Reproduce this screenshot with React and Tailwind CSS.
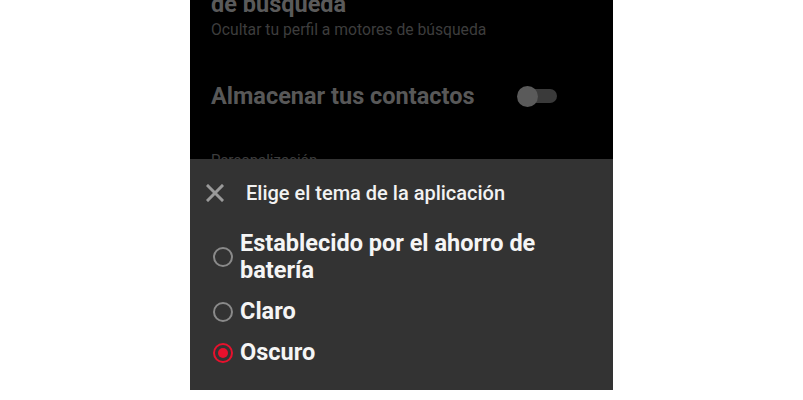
import React, { useState } from 'react';

const options = [
  { id: 'battery', label: 'Establecido por el ahorro de batería' },
  { id: 'light', label: 'Claro' },
  { id: 'dark', label: 'Oscuro' },
];

const Radio = ({ checked }) =>
  checked ? (
    <span className="flex h-[20px] w-[20px] shrink-0 items-center justify-center rounded-full border-2 border-[#e8112d]">
      <span className="h-[10px] w-[10px] rounded-full bg-[#e8112d]" />
    </span>
  ) : (
    <span className="h-[20px] w-[20px] shrink-0 rounded-full border-2 border-[#8a8a8a]" />
  );

const App = () => {
  const [theme, setTheme] = useState('dark');

  return (
    <div className="flex h-[400px] w-full justify-center bg-white font-['Roboto',sans-serif]">
      <div className="flex h-[390px] w-[423px] flex-col overflow-hidden bg-black">
        {/* settings behind the sheet */}
        <div className="h-[159px] overflow-hidden px-[21px]">
          <div className="-mt-[10px] text-[23.5px] font-bold leading-[28px] text-[#5a5a5a]">de búsqueda</div>
          <div className="mt-[2px] text-[15.7px] leading-[20px] text-[#3d3d3d]">Ocultar tu perfil a motores de búsqueda</div>
          <div className="mt-[42px] flex items-center justify-between pr-[35px]">
            <span className="text-[23.5px] font-bold leading-[28px] text-[#585858]">Almacenar tus contactos</span>
            <span className="relative flex h-[21px] w-[40px] items-center">
              <span className="absolute right-0 h-[14px] w-[32px] rounded-full bg-[#3a3a3a]" />
              <span className="absolute left-0 h-[21px] w-[21px] rounded-full bg-[#5a5a5a]" />
            </span>
          </div>
          <div className="mt-[40px] text-[15px] leading-[20px] text-[#3d3d3d]">Personalización</div>
        </div>

        {/* bottom sheet */}
        <div className="flex-1 bg-[#333333] pl-[16px] pr-[20px]">
          <div className="mt-[22px] flex items-center">
            <svg width="18" height="18" viewBox="0 0 18 18" className="text-[#9a9a9a]">
              <path d="M2 2 L16 16 M16 2 L2 16" stroke="currentColor" strokeWidth="3" strokeLinecap="square" />
            </svg>
            <span className="ml-[22px] text-[20px] font-medium leading-[24px] text-[#f2f2f2]">Elige el tema de la aplicación</span>
          </div>
          <div className="mt-[25px] flex flex-col gap-[14px]">
            {options.map((o) => (
              <button
                key={o.id}
                onClick={() => setTheme(o.id)}
                className="flex items-center gap-[7px] pl-[7px] text-left"
              >
                <Radio checked={theme === o.id} />
                <span className="max-w-[330px] text-[23.5px] font-bold leading-[27px] text-[#f5f5f5]">{o.label}</span>
              </button>
            ))}
          </div>
        </div>
      </div>
    </div>
  );
};

export default App;
